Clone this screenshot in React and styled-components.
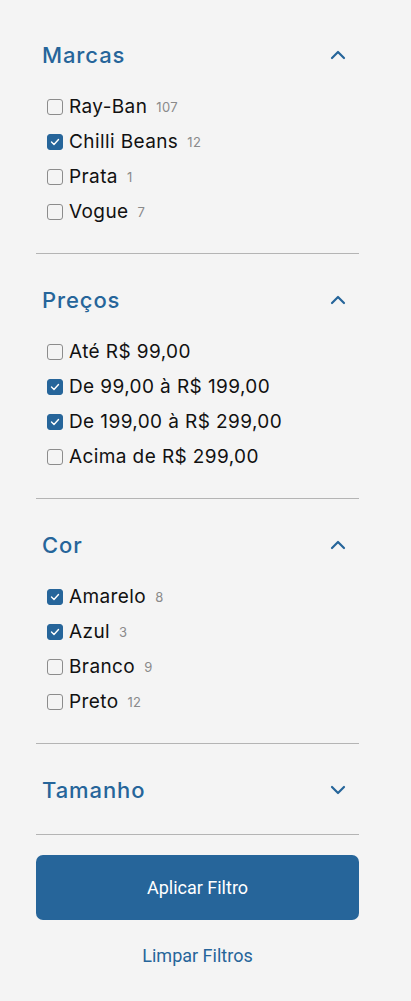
import React from 'react';
import styled, { createGlobalStyle } from 'styled-components';

const GlobalStyle = createGlobalStyle`
    html, body {
        margin: 0;
        padding: 0;
        background: #f4f4f4;
    }
    body {
        font-family: 'Inter', 'Noto Sans', sans-serif;
        color: #111;
    }
`;

const BLUE = '#26659a';

const Sidebar = styled.div`
    width: 323px;
    padding: 9px 52px 0 36px;
`;

const Section = styled.section`
    padding: 31px 0 ${(p) => (p.$open ? 24 : 29)}px;
    border-bottom: 1px solid #b4b4b4;
`;

const Header = styled.div`
    display: flex;
    align-items: center;
    justify-content: space-between;
    height: 30px;
    padding: 0 13px 0 6px;
`;

const Title = styled.h2`
    margin: 0;
    font-size: 22px;
    font-weight: 500;
    color: ${BLUE};
    letter-spacing: 0.9px;
`;

const List = styled.ul`
    list-style: none;
    margin: 19px 0 0;
    padding: 0 0 0 11px;
`;

const Row = styled.li`
    display: flex;
    align-items: center;
    height: 35px;
`;

const Box = styled.span`
    width: 16px;
    height: 16px;
    box-sizing: border-box;
    border-radius: 3px;
    border: 1.5px solid ${(p) => (p.$checked ? BLUE : '#8c8c8c')};
    background: ${(p) => (p.$checked ? BLUE : 'transparent')};
    display: flex;
    align-items: center;
    justify-content: center;
    margin-right: 6px;
    flex-shrink: 0;
`;

const Label = styled.span`
    font-size: 19px;
    letter-spacing: 0.4px;
    color: #111;
`;

const Count = styled.span`
    font-size: 13px;
    letter-spacing: 0.3px;
    color: #8a8a8a;
    margin-left: 9px;
`;

const ApplyButton = styled.button`
    display: block;
    width: 100%;
    height: 65px;
    margin-top: 20px;
    border: none;
    border-radius: 7px;
    background: ${BLUE};
    color: #fff;
    font-family: 'Roboto', sans-serif;
    font-size: 18px;
`;

const ClearLink = styled.button`
    display: block;
    margin: 24px auto 0;
    border: none;
    background: none;
    color: ${BLUE};
    font-family: 'Roboto', sans-serif;
    font-size: 18px;
`;

const Chevron = ({ up }) => (
    <svg width="16" height="10" viewBox="0 0 16 10" fill="none">
        <path
            d={up ? 'M2 8 L8 2 L14 8' : 'M2 2 L8 8 L14 2'}
            stroke={BLUE}
            strokeWidth="2.2"
            strokeLinecap="round"
            strokeLinejoin="round"
        />
    </svg>
);

const Check = () => (
    <svg width="10" height="8" viewBox="0 0 10 8" fill="none">
        <path d="M1.5 4 L4 6.5 L8.5 1.5" stroke="#fff" strokeWidth="1.4" strokeLinecap="round" strokeLinejoin="round" />
    </svg>
);

const filters = [
    {
        title: 'Marcas',
        open: true,
        items: [
            { label: 'Ray-Ban', count: 107 },
            { label: 'Chilli Beans', count: 12, checked: true },
            { label: 'Prata', count: 1 },
            { label: 'Vogue', count: 7 },
        ],
    },
    {
        title: 'Preços',
        open: true,
        items: [
            { label: 'Até R$ 99,00' },
            { label: 'De 99,00 à R$ 199,00', checked: true },
            { label: 'De 199,00 à R$ 299,00', checked: true },
            { label: 'Acima de R$ 299,00' },
        ],
    },
    {
        title: 'Cor',
        open: true,
        items: [
            { label: 'Amarelo', count: 8, checked: true },
            { label: 'Azul', count: 3, checked: true },
            { label: 'Branco', count: 9 },
            { label: 'Preto', count: 12 },
        ],
    },
    { title: 'Tamanho', open: false, items: [] },
];

const App = () => (
    <Sidebar>
        <GlobalStyle />
        {filters.map((f) => (
            <Section key={f.title} $open={f.open}>
                <Header>
                    <Title>{f.title}</Title>
                    <Chevron up={f.open} />
                </Header>
                {f.open && (
                    <List>
                        {f.items.map((item) => (
                            <Row key={item.label}>
                                <Box $checked={item.checked}>{item.checked && <Check />}</Box>
                                <Label>{item.label}</Label>
                                {item.count !== undefined && <Count>{item.count}</Count>}
                            </Row>
                        ))}
                    </List>
                )}
            </Section>
        ))}
        <ApplyButton>Aplicar Filtro</ApplyButton>
        <ClearLink>Limpar Filtros</ClearLink>
    </Sidebar>
);

export default App;
